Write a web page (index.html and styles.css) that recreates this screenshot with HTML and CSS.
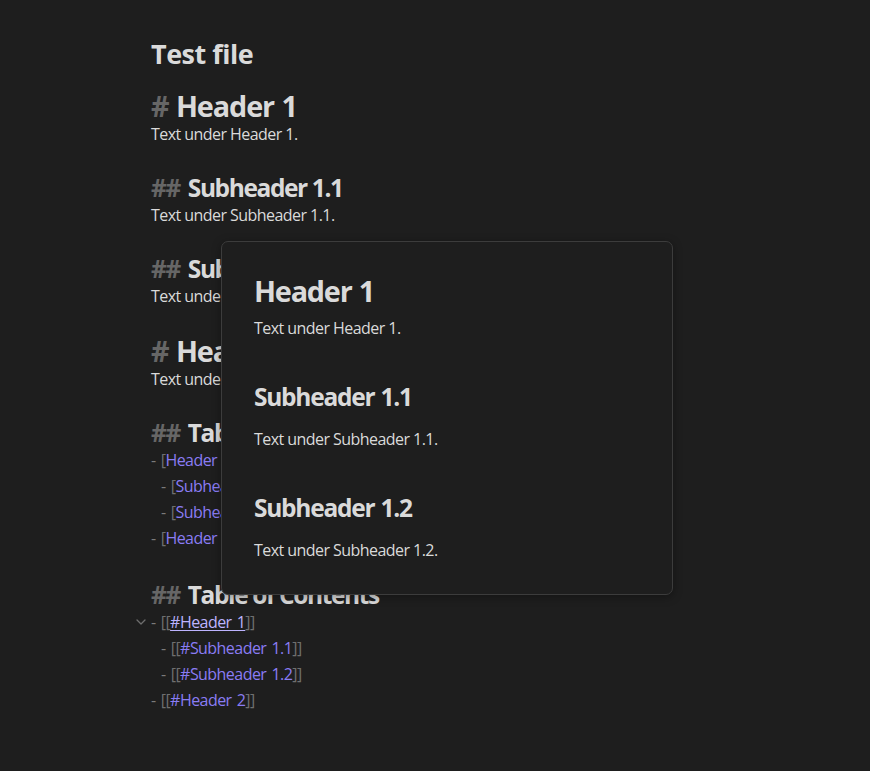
FILE: index.html
```html
<!DOCTYPE html>
<html>
<head>
<meta charset="utf-8">
<link rel="stylesheet" href="styles.css">
</head>
<body>
<div class="editor">
  <div class="title">Test file</div>
  <div class="line h1"><span class="hash">#</span> Header 1</div>
  <div class="line">Text under Header 1.</div>
  <div class="blank"></div>
  <div class="line h2"><span class="hash">##</span> Subheader 1.1</div>
  <div class="line">Text under Subheader 1.1.</div>
  <div class="blank"></div>
  <div class="line h2"><span class="hash">##</span> Subheader 1.2</div>
  <div class="line">Text under Subheader 1.2.</div>
  <div class="blank"></div>
  <div class="line h1"><span class="hash">#</span> Header 2</div>
  <div class="line">Text under Header 2.</div>
  <div class="blank"></div>
  <div class="line h2"><span class="hash">##</span> Table of Contents</div>
  <div class="line li"><span class="dash">-</span> <span class="br">[</span><span class="link">Header 1</span><span class="br">](#Header%201)</span></div>
  <div class="line li nested"><span class="dash">-</span> <span class="br">[</span><span class="link">Subheader 1.1</span><span class="br">](#Subheader%201.1)</span></div>
  <div class="line li nested"><span class="dash">-</span> <span class="br">[</span><span class="link">Subheader 1.2</span><span class="br">](#Subheader%201.2)</span></div>
  <div class="line li"><span class="dash">-</span> <span class="br">[</span><span class="link">Header 2</span><span class="br">](#Header%202)</span></div>
  <div class="blank b2"></div>
  <div class="line h2 toc"><span class="hash">##</span> Table of Contents</div>
  <div class="line li fold"><svg class="chev" width="10" height="6" viewBox="0 0 10 6"><path d="M1 1 L5 5 L9 1" fill="none" stroke="#6e6e6e" stroke-width="1.3" stroke-linecap="round" stroke-linejoin="round"/></svg><span class="dash">-</span> <span class="br">[[</span><span class="link hover">#Header 1</span><span class="br">]]</span></div>
  <div class="line li nested"><span class="dash">-</span> <span class="br">[[</span><span class="link">#Subheader 1.1</span><span class="br">]]</span></div>
  <div class="line li nested"><span class="dash">-</span> <span class="br">[[</span><span class="link">#Subheader 1.2</span><span class="br">]]</span></div>
  <div class="line li"><span class="dash">-</span> <span class="br">[[</span><span class="link">#Header 2</span><span class="br">]]</span></div>
</div>

<div class="popover">
  <h1 class="p-h1">Header 1</h1>
  <p class="p-text">Text under Header 1.</p>
  <h2 class="p-h2">Subheader 1.1</h2>
  <p class="p-text">Text under Subheader 1.1.</p>
  <h2 class="p-h2">Subheader 1.2</h2>
  <p class="p-text">Text under Subheader 1.2.</p>
</div>
</body>
</html>
```

FILE: styles.css
```css
html, body {
  margin: 0;
  padding: 0;
  background: #1e1e1e;
  height: 100%;
}
body {
  font-family: "Open Sans", "Noto Sans", sans-serif;
  color: #dadada;
  font-size: 16px;
  position: relative;
  overflow: hidden;
}
.editor {
  padding: 34px 0 0 151px;
}
.title {
  font-size: 27px;
  font-weight: 700;
  line-height: 40px;
  margin-bottom: 16px;
  letter-spacing: -0.5px;
}
.line {
  line-height: 26px;
  white-space: nowrap;
  letter-spacing: -0.55px;
  position: relative;
}
.li { word-spacing: 1.5px; }
.blank { height: 26px; }
.blank.b2 { height: 29px; }
.h1 {
  font-size: 28.8px;
  font-weight: 700;
  line-height: 31px;
  letter-spacing: -1.1px;
  word-spacing: 1px;
}
.h2 {
  font-size: 24.5px;
  font-weight: 700;
  line-height: 29px;
  letter-spacing: -1.4px;
}
.h2 .hash { margin-right: 3px; }
.hash { color: #666666; }
.dash { color: #7a7a7a; }
.br { color: #6f6f6f; }
.link { color: #8a7cf4; }
.link.hover {
  color: #bdb3ff;
  text-decoration: underline;
  text-underline-offset: 2px;
}
.nested { padding-left: 10px; }
.chev {
  position: absolute;
  left: -15px;
  top: 10px;
}
.popover {
  position: absolute;
  left: 221px;
  top: 241px;
  width: 450px;
  height: 352px;
  box-sizing: content-box;
  background: #1e1e1e;
  border: 1px solid #3c3c3c;
  border-radius: 7px;
  box-shadow: 0 2px 10px rgba(0, 0, 0, 0.35);
  padding: 0;
}
.popover::before {
  content: "";
  display: block;
  height: 31px;
}
.p-h1 {
  margin: 0 0 0 32px;
  font-size: 28.8px;
  font-weight: 700;
  line-height: 36px;
  letter-spacing: -1.2px;
  word-spacing: 1px;
}
.p-h2 {
  margin: 41px 0 0 32px;
  font-size: 24.5px;
  font-weight: 700;
  line-height: 31px;
  letter-spacing: -1.25px;
  word-spacing: 1px;
}
.p-text {
  margin: 0 0 0 32px;
  font-size: 16px;
  line-height: 24px;
  letter-spacing: -0.55px;
}
.p-h1 + .p-text { margin-top: 7px; }
.p-h2 + .p-text { margin-top: 15px; }
```
